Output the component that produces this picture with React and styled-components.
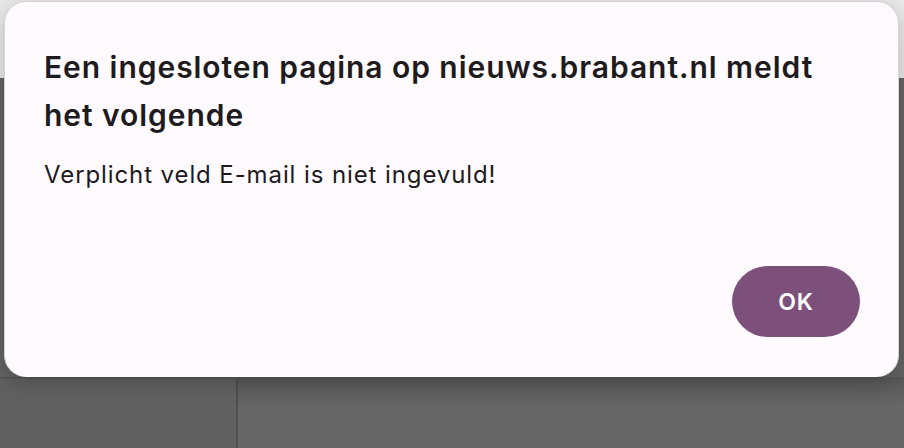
import React from "react";
import styled, { createGlobalStyle } from "styled-components";

const Global = createGlobalStyle`
  html, body { margin: 0; padding: 0; }
  body { font-family: Inter, "Noto Sans", sans-serif; }
`;

const Page = styled.div`
  position: relative;
  width: 904px;
  height: 448px;
  overflow: hidden;
  display: flex;
  flex-direction: column;
  background: #646464;
`;

const TopBar = styled.div`
  height: 78px;
  background: #ebeaea;
  flex: none;
`;

const Content = styled.div`
  flex: 1;
  display: flex;
  flex-direction: column;
`;

const ContentTop = styled.div`
  height: 299px;
  border-bottom: 2px solid #585858;
  flex: none;
`;

const ContentBottom = styled.div`
  flex: 1;
  display: flex;
`;

const Sidebar = styled.div`
  width: 236px;
  border-right: 2px solid #4f4f4f;
  background: #616161;
`;

const Main = styled.div`
  flex: 1;
  background: linear-gradient(180deg, #5a5a5a 0%, #666666 40%);
`;

const Dialog = styled.div`
  position: absolute;
  left: 4px;
  top: 1px;
  width: 895px;
  height: 376px;
  box-sizing: border-box;
  background: #fefafd;
  border: 1px solid #d6d3d5;
  border-bottom: none;
  border-radius: 22px;
  box-shadow: 0 6px 22px rgba(0, 0, 0, 0.22);
  padding: 41px 38px 40px 39px;
  display: flex;
  flex-direction: column;
`;

const Title = styled.h1`
  margin: 0;
  font-family: Inter, "Noto Sans", sans-serif;
  font-size: 30px;
  font-weight: 600;
  line-height: 48px;
  color: #1e1b1e;
  letter-spacing: 0.95px;
`;

const Message = styled.p`
  margin: 21px 0 0;
  font-family: Inter, "Noto Sans", sans-serif;
  font-size: 24px;
  font-weight: 400;
  line-height: 30px;
  color: #1e1b1e;
  letter-spacing: 0.9px;
`;

const Actions = styled.div`
  margin-top: auto;
  display: flex;
  justify-content: flex-end;
`;

const OkButton = styled.button`
  width: 128px;
  height: 71px;
  border: none;
  border-radius: 36px;
  background: #7d4f7b;
  color: #ffffff;
  font-family: Inter, "Noto Sans", sans-serif;
  font-size: 23px;
  font-weight: 600;
  letter-spacing: 0.8px;
  cursor: pointer;
`;

export default function App() {
  return (
    <>
      <Global />
      <Page>
        <TopBar />
        <Content>
          <ContentTop />
          <ContentBottom>
            <Sidebar />
            <Main />
          </ContentBottom>
        </Content>
        <Dialog role="alertdialog">
          <Title>Een ingesloten pagina op nieuws.brabant.nl meldt het volgende</Title>
          <Message>Verplicht veld E-mail is niet ingevuld!</Message>
          <Actions>
            <OkButton>OK</OkButton>
          </Actions>
        </Dialog>
      </Page>
    </>
  );
}
